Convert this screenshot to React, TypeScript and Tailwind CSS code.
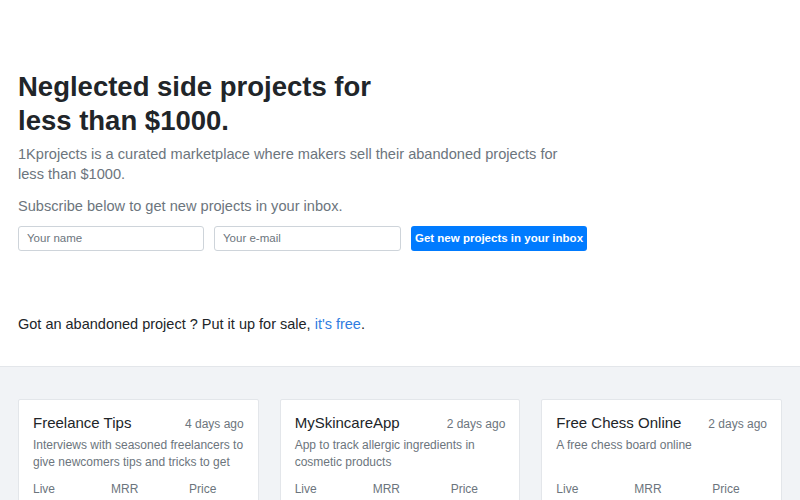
import React from "react";

const cards = [
  { title: "Freelance Tips", ago: "4 days ago", desc: "Interviews with seasoned freelancers to give newcomers tips and tricks to get" },
  { title: "MySkincareApp", ago: "2 days ago", desc: "App to track allergic ingredients in cosmetic products" },
  { title: "Free Chess Online", ago: "2 days ago", desc: "A free chess board online" },
];

export default function App() {
  return (
    <div className="w-[800px] h-[500px] overflow-hidden bg-white text-[#212529]" style={{ fontFamily: "'Liberation Sans', Arial, sans-serif" }}>
      <div className="px-[18px] pt-[70px]">
        <h1 className="text-[27.5px] leading-[34px] font-bold text-[#212529]">
          Neglected side projects for
          <br />
          less than $1000.
        </h1>
        <p className="mt-[6px] text-[14.6px] leading-[20px] text-[#6c757d] w-[560px]">
          1Kprojects is a curated marketplace where makers sell their abandoned projects for less than $1000.
        </p>
        <p className="mt-[12px] text-[14.6px] leading-[20px] text-[#6c757d]">Subscribe below to get new projects in your inbox.</p>
        <div className="mt-[10px] flex gap-[10px]">
          <div className="w-[186px] h-[25px] border border-[#ced4da] rounded-[3px] px-[8px] flex items-center text-[11.5px] text-[#6c757d]">Your name</div>
          <div className="w-[187px] h-[25px] border border-[#ced4da] rounded-[3px] px-[8px] flex items-center text-[11.5px] text-[#6c757d]">Your e-mail</div>
          <button className="w-[176px] h-[25px] rounded-[3px] bg-[#007bff] text-white text-[11.5px] font-bold flex items-center justify-center">Get new projects in your inbox</button>
        </div>
        <p className="mt-[63px] text-[14.5px] leading-[20px] text-[#212529]">
          Got an abandoned project ? Put it up for sale, <span className="text-[#2f7de1]">it's free</span>.
        </p>
      </div>
      <div className="mt-[32px] border-t border-[#e3e6ea] bg-[#f1f3f6] h-[200px] px-[18px] pt-[32px]">
        <div className="flex gap-[21px]">
          {cards.map((c) => (
            <div key={c.title} className="w-[241px] h-[140px] bg-white border border-[#e3e6ea] rounded-[2px] px-[14px] pt-[12px]">
              <div className="flex items-baseline justify-between">
                <span className="text-[15px] text-[#212529]">{c.title}</span>
                <span className="text-[12px] text-[#6c757d]">{c.ago}</span>
              </div>
              <p className="mt-[2px] text-[12px] leading-[17px] text-[#6c757d] h-[34px]">{c.desc}</p>
              <div className="mt-[9px] grid grid-cols-[78px_78px_1fr] text-[12px] text-[#6c757d]">
                <span>Live</span>
                <span>MRR</span>
                <span>Price</span>
              </div>
            </div>
          ))}
        </div>
      </div>
    </div>
  );
}
